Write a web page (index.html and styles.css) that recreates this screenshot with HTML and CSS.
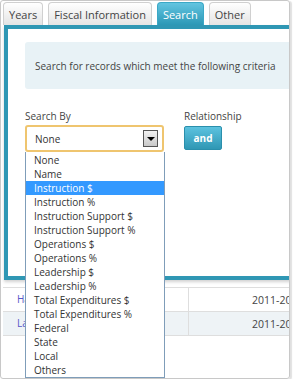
FILE: index.html
```html
<!DOCTYPE html>
<html lang="en">
<head>
    <meta charset="UTF-8">
    <title>Search</title>
    <link rel="stylesheet" href="styles.css">
</head>
<body>
    <div class="frame">
        <div class="tabs">
            <span class="tab">Years</span>
            <span class="tab">Fiscal Information</span>
            <span class="tab active">Search</span>
            <span class="tab">Other</span>
        </div>

        <div class="panel">
            <div class="info">Search for records which meet the following criteria</div>

            <div class="form-row">
                <div class="field search-by">
                    <label>Search By</label>
                    <div class="select">
                        <span>None</span>
                        <span class="arrow"></span>
                    </div>
                    <ul class="dropdown">
                        <li>None</li>
                        <li>Name</li>
                        <li class="selected">Instruction $</li>
                        <li>Instruction %</li>
                        <li>Instruction Support $</li>
                        <li>Instruction Support %</li>
                        <li>Operations $</li>
                        <li>Operations %</li>
                        <li>Leadership $</li>
                        <li>Leadership %</li>
                        <li>Total Expenditures $</li>
                        <li>Total Expenditures %</li>
                        <li>Federal</li>
                        <li>State</li>
                        <li>Local</li>
                        <li>Others</li>
                    </ul>
                </div>
                <div class="field">
                    <label>Relationship</label>
                    <button class="and-btn">and</button>
                </div>
            </div>
        </div>

        <div class="results">
            <div class="row">
                <a class="name">Harbor Elementary</a>
                <span class="year">2011-2012</span>
            </div>
            <div class="row alt">
                <a class="name">Lakeside Middle</a>
                <span class="year">2011-2012</span>
            </div>
        </div>
    </div>
</body>
</html>
```

FILE: styles.css
```css
body {
    margin: 0;
    padding: 0;
    background-color: white;
    font-family: 'Open Sans', sans-serif;
    font-size: 10px;
    color: #444;
}
.frame {
    width: 288px;
    height: 377px;
    border: 1px solid #c8c8c8;
    border-radius: 3px;
    box-shadow: 2px 1px 1px rgba(0, 0, 0, 0.12);
    overflow: hidden;
    position: relative;
}
.tabs {
    display: flex;
    gap: 5px;
    padding: 1px 0 0 2px;
    height: 23px;
}
.tab {
    display: flex;
    align-items: center;
    padding: 0 5px;
    font-size: 11px;
    color: #444;
    border: 1px solid #d0d0d0;
    border-bottom: none;
    border-radius: 4px 4px 0 0;
    background: linear-gradient(#ffffff, #e4e4e4);
    box-sizing: border-box;
    height: 23px;
}
.tab.active {
    color: white;
    border-color: #3ba8c6;
    background: linear-gradient(#62c4e0, #2c98b6);
}
.panel {
    margin-left: 3px;
    width: 320px;
    height: 234px;
    border: 4px solid #2f97b4;
    background-color: white;
    box-shadow: 0 2px 3px rgba(0, 0, 0, 0.18);
    padding: 13px 0 0 17px;
    box-sizing: content-box;
}
.info {
    background-color: #e8f2f6;
    border-radius: 3px;
    height: 47px;
    display: flex;
    align-items: center;
    padding-left: 10px;
    width: 300px;
}
.form-row {
    display: flex;
    gap: 20px;
    margin-top: 21px;
}
.field label {
    display: block;
    line-height: 12px;
    margin-bottom: 3px;
}
.search-by {
    position: relative;
    width: 139px;
}
.select {
    height: 27px;
    box-sizing: border-box;
    border: 2px solid #efc56f;
    border-radius: 3px;
    display: flex;
    align-items: center;
    justify-content: space-between;
    padding: 0 4px 0 8px;
    color: #333;
}
.arrow {
    width: 15px;
    height: 17px;
    box-sizing: border-box;
    border: 1px solid #555;
    background: linear-gradient(#f2f2f2, #c9c9c9);
    position: relative;
}
.arrow::after {
    content: "";
    position: absolute;
    left: 3px;
    top: 6px;
    border-left: 4px solid transparent;
    border-right: 4px solid transparent;
    border-top: 4px solid black;
}
.dropdown {
    position: absolute;
    left: 0;
    top: 42px;
    width: 138px;
    margin: 0;
    padding: 1px 0 0 0;
    list-style: none;
    background-color: white;
    border: 1px solid #7f9db9;
    border-top: none;
    z-index: 5;
    color: #333;
}
.dropdown li {
    height: 14px;
    line-height: 14px;
    padding-left: 8px;
}
.dropdown li.selected {
    background-color: #3399ff;
    color: white;
}
.and-btn {
    width: 38px;
    height: 24px;
    margin-top: 1px;
    border: 1px solid #2a8fac;
    border-radius: 2px;
    background: linear-gradient(#5cc2df, #2f97b4);
    color: white;
    font-family: 'Open Sans', sans-serif;
    font-size: 10px;
    font-weight: bold;
    padding: 0;
}
.results {
    margin: 7px 0 0 2px;
    border-top: 1px solid #dedede;
}
.row {
    display: grid;
    grid-template-columns: 186px 1fr;
    height: 23px;
    border-bottom: 1px solid #dedede;
    align-items: center;
    white-space: nowrap;
    overflow: hidden;
}
.row.alt {
    background-color: #eef3f6;
}
.row .name {
    color: #5757c8;
    padding-left: 14px;
    border-right: 1px solid #dedede;
    height: 23px;
    line-height: 23px;
    overflow: hidden;
}
.row .year {
    padding-left: 63px;
    font-size: 10.5px;
}
```
